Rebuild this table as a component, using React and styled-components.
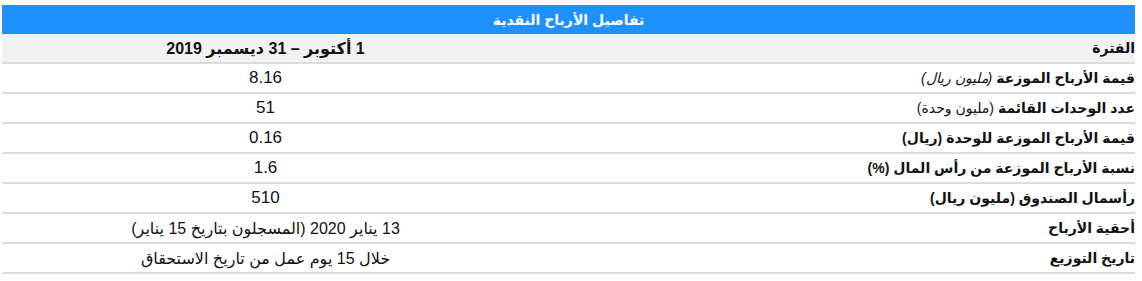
import React from "react"
import styled, { createGlobalStyle } from "styled-components"

const Global = createGlobalStyle`
  body {
    margin: 0;
    background: #fff;
    font-family: "Liberation Sans", Arial, "DejaVu Sans", sans-serif;
    color: #111;
  }
`

const Wrap = styled.div`
  padding: 5px 0 0 2px;
`

const Table = styled.div`
  width: 1133px;
  direction: rtl;
`

const Title = styled.div`
  height: 29px;
  background: #1e90ff;
  color: #fff;
  font-weight: 700;
  font-size: 14px;
  display: flex;
  align-items: center;
  justify-content: center;
`

const Row = styled.div`
  display: grid;
  grid-template-columns: 1fr 527px;
  height: 28px;
  border-bottom: 2px solid #dcdcdc;
  background: ${props => (props.head ? "#f2f2f2" : "#fff")};
`

const Label = styled.div`
  display: flex;
  align-items: center;
  font-weight: 700;
  font-size: 14px;
  white-space: nowrap;
`

const Note = styled.span`
  font-weight: ${props => (props.bold ? 700 : 400)};
  font-style: ${props => (props.italic ? "italic" : "normal")};
  margin-right: 4px;
`

const Value = styled.div`
  display: flex;
  align-items: center;
  justify-content: center;
  font-size: ${props => (props.head ? "16px" : "17px")};
  font-weight: ${props => (props.head ? 700 : 400)};
  white-space: nowrap;
`

const Small = styled.span`
  font-size: 16px;
`

const rows = [
  { label: "قيمة الأرباح الموزعة", note: "(مليون ريال)", italic: true, value: "8.16" },
  { label: "عدد الوحدات القائمة", note: "(مليون وحدة)", value: "51" },
  { label: "قيمة الأرباح الموزعة للوحدة", note: "(ريال)", bold: true, value: "0.16" },
  { label: "نسبة الأرباح الموزعة من رأس المال", note: "(%)", bold: true, value: "1.6" },
  { label: "رأسمال الصندوق", note: "(مليون ريال)", bold: true, value: "510" },
  {
    label: "أحقية الأرباح",
    value: <Small>13 يناير 2020 (المسجلون بتاريخ 15 يناير)</Small>
  },
  {
    label: "تاريخ التوزيع",
    value: <Small>خلال 15 يوم عمل من تاريخ الاستحقاق</Small>
  }
]

export default () => (
  <Wrap>
    <Global />
    <Table>
      <Title>تفاصيل الأرباح النقدية</Title>
      <Row head>
        <Label>الفترة</Label>
        <Value head>1 أكتوبر – 31 ديسمبر 2019</Value>
      </Row>
      {rows.map(r => (
        <Row key={r.label}>
          <Label>
            {r.label}
            {r.note && (
              <Note italic={r.italic} bold={r.bold}>
                {r.note}
              </Note>
            )}
          </Label>
          <Value>{r.value}</Value>
        </Row>
      ))}
    </Table>
  </Wrap>
)
